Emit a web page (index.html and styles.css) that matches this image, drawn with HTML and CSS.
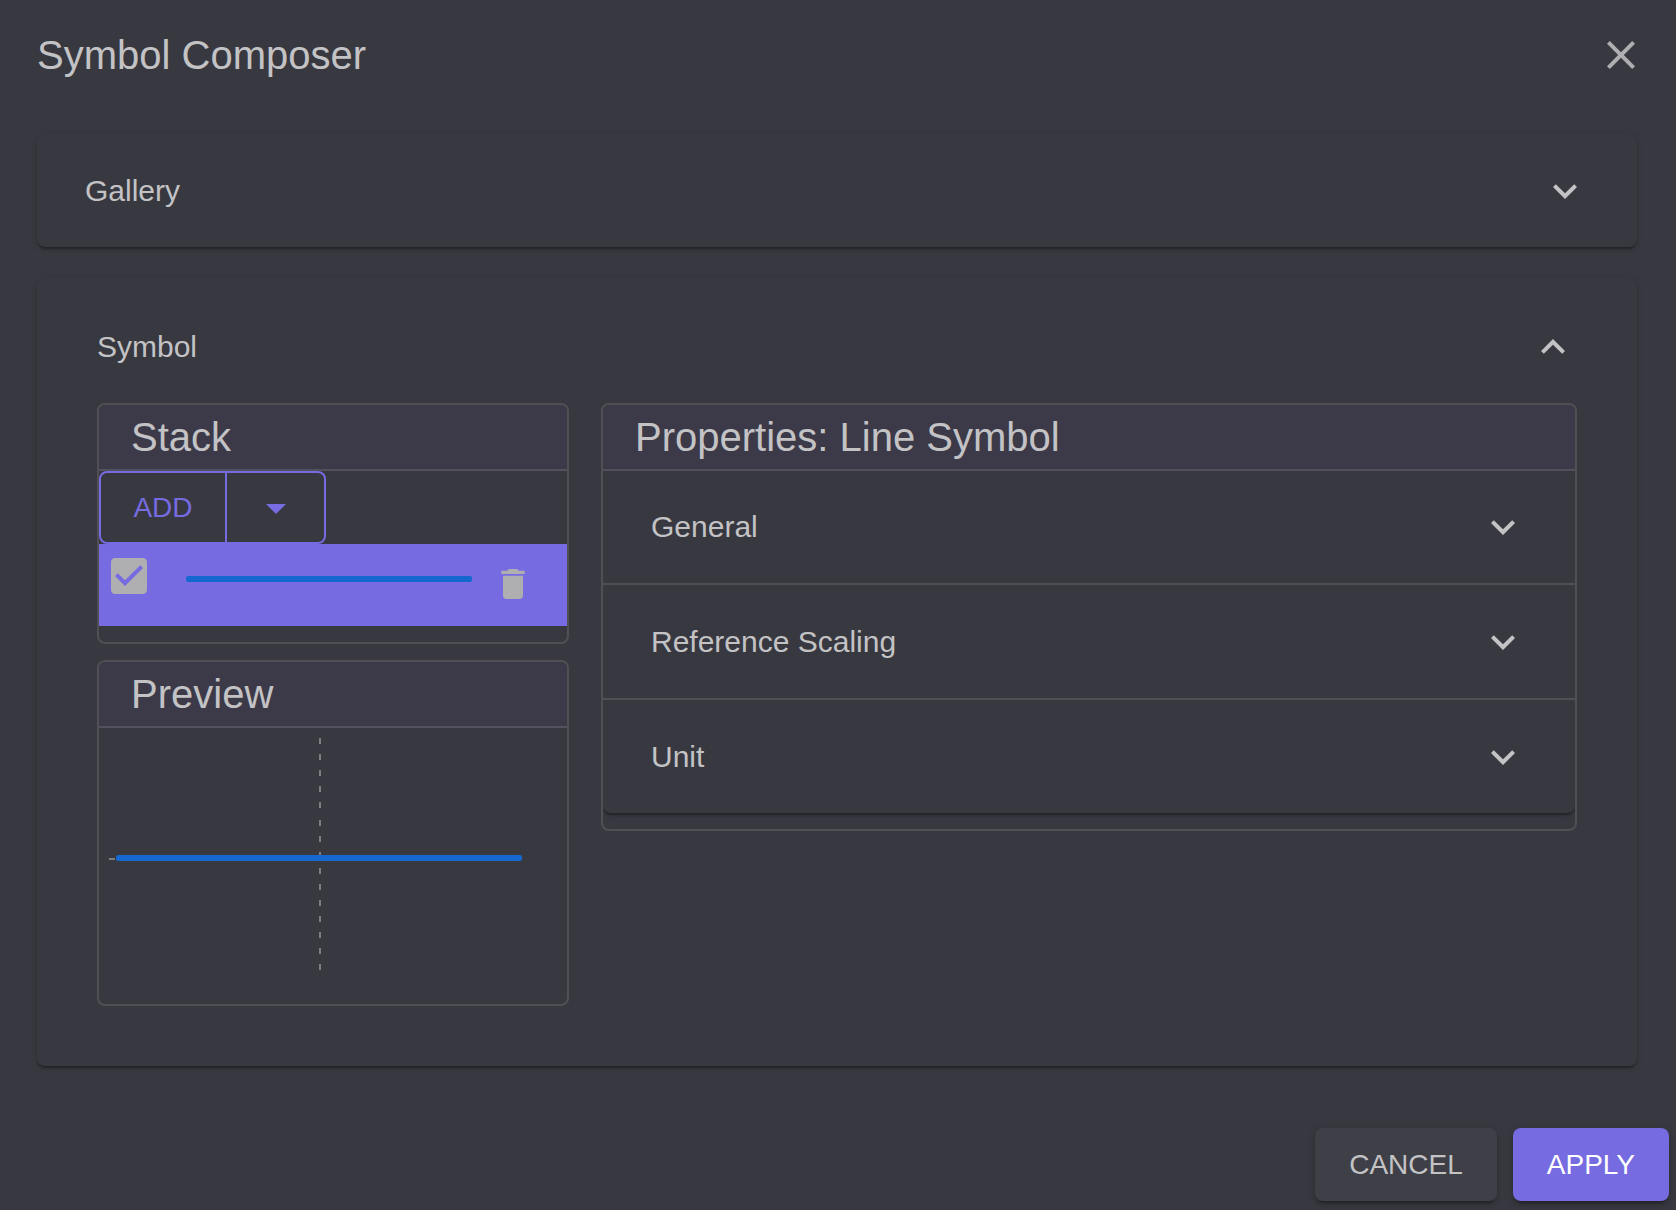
FILE: index.html
```html
<!DOCTYPE html>
<html lang="en">
<head>
<meta charset="utf-8">
<meta name="viewport" content="width=device-width, initial-scale=1">
<title>Symbol Composer</title>
<link rel="stylesheet" href="styles.css">
</head>
<body>
<div class="dialog" role="dialog" aria-labelledby="dialog-title">
  <header class="dialog-header">
    <h1 class="heading" id="dialog-title">Symbol Composer</h1>
    <button class="icon-button" type="button" aria-label="Close">
      <svg class="icon" viewBox="0 0 24 24" aria-hidden="true"><path d="M19 6.41L17.59 5 12 10.59 6.41 5 5 6.41 10.59 12 5 17.59 6.41 19 12 13.41 17.59 19 19 17.59 13.41 12z"/></svg>
    </button>
  </header>

  <main class="dialog-content">
    <section class="panel">
      <button class="accordion-toggle" type="button" aria-expanded="false">
        <span>Gallery</span>
        <svg class="icon" viewBox="0 0 24 24" aria-hidden="true"><path d="M16.59 8.59L12 13.17 7.41 8.59 6 10l6 6 6-6z"/></svg>
      </button>
    </section>

    <section class="panel panel-open">
      <button class="accordion-toggle" type="button" aria-expanded="true">
        <span>Symbol</span>
        <svg class="icon" viewBox="0 0 24 24" aria-hidden="true"><path d="M12 8l-6 6 1.41 1.41L12 10.83l4.59 4.58L18 14z"/></svg>
      </button>
      <div class="editor">
        <div class="editor-side">
          <section class="card">
            <h2 class="heading card-title">Stack</h2>
            <div class="button-group">
              <button class="group-button group-main" type="button">ADD</button>
              <button class="group-button group-menu" type="button" aria-label="More symbol types">
                <svg class="icon" viewBox="0 0 24 24" aria-hidden="true"><path d="M7 10l5 5 5-5z"/></svg>
              </button>
            </div>
            <ul class="layers">
              <li class="layer">
                <label class="checkbox">
                  <input class="checkbox-input" type="checkbox" checked aria-label="Layer visible">
                  <svg class="icon checkbox-icon" viewBox="0 0 24 24" aria-hidden="true"><path d="M19 3H5c-1.11 0-2 .9-2 2v14c0 1.1.89 2 2 2h14c1.11 0 2-.9 2-2V5c0-1.1-.89-2-2-2zm-9 14l-5-5 1.41-1.41L10 14.17l7.59-7.59L19 8l-9 9z"/></svg>
                </label>
                <span class="layer-line"></span>
                <button class="icon-button layer-delete" type="button" aria-label="Delete layer">
                  <svg class="icon icon-small" viewBox="0 0 24 24" aria-hidden="true"><path d="M6 19c0 1.1.9 2 2 2h8c1.1 0 2-.9 2-2V7H6v12zM19 4h-3.500l-1-1h-5l-1 1H5v2h14V4z"/></svg>
                </button>
              </li>
            </ul>
          </section>

          <section class="card card-preview">
            <h2 class="heading card-title">Preview</h2>
            <svg class="preview" width="468" height="276" viewBox="0 0 468 276" role="img" aria-label="Line symbol preview">
              <g stroke="#7d7d80" stroke-width="2" stroke-dasharray="6 10">
                <path d="M221 10v72"/>
                <path d="M221 92v150"/>
                <path d="M10 131h8"/>
              </g>
              <rect x="17" y="127" width="406" height="6" rx="2" fill="#1668d1"/>
            </svg>
          </section>
        </div>

        <section class="card editor-main">
          <h2 class="heading card-title">Properties: Line Symbol</h2>
          <div class="property-list">
            <button class="accordion-toggle property" type="button" aria-expanded="false">
              <span>General</span>
              <svg class="icon" viewBox="0 0 24 24" aria-hidden="true"><path d="M16.59 8.59L12 13.17 7.41 8.59 6 10l6 6 6-6z"/></svg>
            </button>
            <button class="accordion-toggle property" type="button" aria-expanded="false">
              <span>Reference Scaling</span>
              <svg class="icon" viewBox="0 0 24 24" aria-hidden="true"><path d="M16.59 8.59L12 13.17 7.41 8.59 6 10l6 6 6-6z"/></svg>
            </button>
            <button class="accordion-toggle property" type="button" aria-expanded="false">
              <span>Unit</span>
              <svg class="icon" viewBox="0 0 24 24" aria-hidden="true"><path d="M16.59 8.59L12 13.17 7.41 8.59 6 10l6 6 6-6z"/></svg>
            </button>
          </div>
        </section>
      </div>
    </section>
  </main>

  <footer class="dialog-actions">
    <button class="button" type="button">CANCEL</button>
    <button class="button button-primary" type="button">APPLY</button>
  </footer>
</div>
</body>
</html>
```
FILE: styles.css
```css
:root {
  --surface: #383840;
  --surface-title: #3c3a48;
  --surface-button: #3f3f47;
  --line: #505054;
  --line-title: #52515e;
  --text: #c3c3c5;
  --icon-muted: #afafb2;
  --primary: #766be0;
  --blue: #1668d1;
  --panel-shadow: 0 4px 2px -2px rgba(0, 0, 0, .2), 0 2px 2px 0 rgba(0, 0, 0, .14), 0 2px 6px 0 rgba(0, 0, 0, .12);
}

* {
  box-sizing: border-box;
}

body {
  margin: 0;
  background: var(--surface);
  color: var(--text);
  font: 30px/48px "Liberation Sans", Arial, sans-serif;
}

button {
  margin: 0;
  padding: 0;
  border: 0;
  background: none;
  color: inherit;
  font: inherit;
  cursor: pointer;
}

.heading {
  margin: 0;
  font-size: 40px;
  font-weight: 400;
  line-height: 64px;
}

.icon {
  display: block;
  flex: none;
  width: 48px;
  height: 48px;
  fill: currentColor;
}

.icon-small {
  width: 40px;
  height: 40px;
}

.icon-button {
  flex: none;
  color: var(--icon-muted);
}

.dialog {
  display: flex;
  flex-direction: column;
  min-height: 100vh;
}

.dialog-header {
  display: flex;
  align-items: center;
  justify-content: space-between;
  height: 110px;
  padding: 0 31px 0 37px;
}

.dialog-content {
  display: flex;
  flex-direction: column;
  gap: 31px;
  padding: 24px 39px 0 37px;
}

.panel {
  border-radius: 8px;
  background: var(--surface);
  box-shadow: var(--panel-shadow);
}

.panel-open {
  padding: 12px;
}

.accordion-toggle {
  display: flex;
  align-items: center;
  justify-content: space-between;
  width: 100%;
  min-height: 113px;
  padding: 0 48px;
  text-align: left;
}

.editor {
  display: grid;
  grid-template-columns: repeat(12, 1fr);
  gap: 32px;
  align-items: start;
  padding: 0 48px 48px;
}

.editor-side {
  display: flex;
  flex-direction: column;
  grid-column: span 4;
  gap: 16px;
}

.editor-main {
  grid-column: span 8;
}

.card {
  padding-bottom: 16px;
  overflow: hidden;
  border: 2px solid var(--line);
  border-radius: 8px;
}

.card-preview {
  padding-bottom: 0;
}

.card-title {
  padding: 0 32px;
  border-bottom: 2px solid var(--line-title);
  background: var(--surface-title);
}

.button-group {
  display: flex;
  color: var(--primary);
}

.group-button {
  display: flex;
  align-items: center;
  justify-content: center;
  height: 73px;
  border: 2px solid var(--primary);
  font-size: 28px;
}

.group-main {
  width: 128px;
  border-radius: 8px 0 0 8px;
}

.group-menu {
  width: 99px;
  border-left: 0;
  border-radius: 0 8px 8px 0;
}

.layers {
  margin: 0;
  padding: 0;
  list-style: none;
}

.layer {
  display: flex;
  align-items: flex-start;
  height: 82px;
  padding: 8px 34px 0 6px;
  background: var(--primary);
}

.checkbox {
  display: grid;
  flex: none;
  color: var(--icon-muted);
}

.checkbox-input,
.checkbox-icon {
  grid-area: 1 / 1;
}

.checkbox-input {
  width: 48px;
  height: 48px;
  margin: 0;
  appearance: none;
}

.checkbox-icon {
  pointer-events: none;
}

.layer-line {
  flex: 1;
  height: 6px;
  margin: 24px 21px 0 33px;
  border-radius: 2px;
  background: var(--blue);
}

.layer-delete {
  margin-top: 12px;
}

.preview {
  display: block;
}

.property-list {
  border-radius: 8px;
  box-shadow: var(--panel-shadow);
}

.property {
  min-height: 112px;
}

.property + .property {
  min-height: 115px;
  border-top: 2px solid var(--line);
}

.dialog-actions {
  display: flex;
  justify-content: flex-end;
  gap: 16px;
  padding: 62px 7px 9px;
}

.button {
  height: 73px;
  padding: 0 34px;
  border-radius: 8px;
  background: var(--surface-button);
  box-shadow: 0 6px 2px -4px rgba(0, 0, 0, .2), 0 4px 4px 0 rgba(0, 0, 0, .14), 0 2px 10px 0 rgba(0, 0, 0, .12);
  font-size: 28px;
}

.button-primary {
  background: var(--primary);
  color: #fff;
}
```
